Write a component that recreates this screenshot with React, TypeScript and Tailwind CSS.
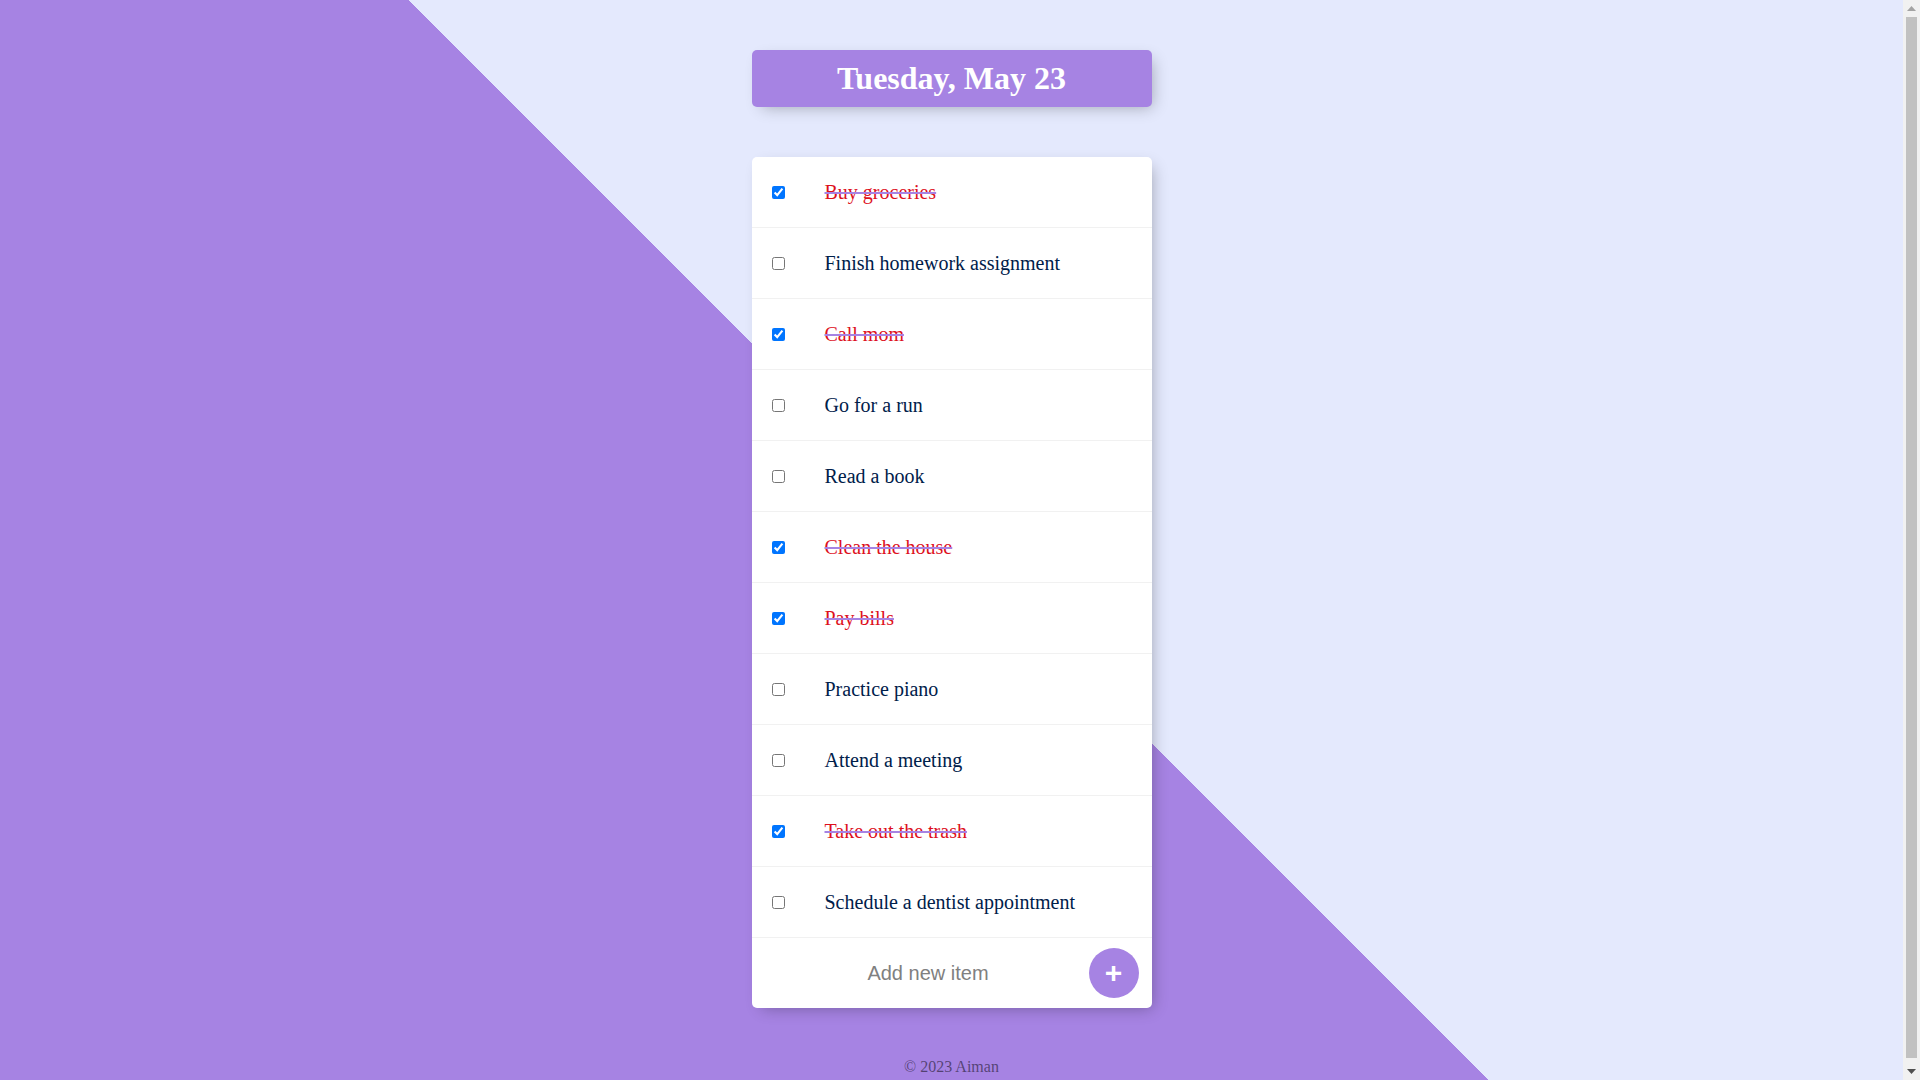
import React from "react";

const items: { text: string; done: boolean }[] = [
  { text: "Buy groceries", done: true },
  { text: "Finish homework assignment", done: false },
  { text: "Call mom", done: true },
  { text: "Go for a run", done: false },
  { text: "Read a book", done: false },
  { text: "Clean the house", done: true },
  { text: "Pay bills", done: true },
  { text: "Practice piano", done: false },
  { text: "Attend a meeting", done: false },
  { text: "Take out the trash", done: true },
  { text: "Schedule a dentist appointment", done: false },
];

function ScrollBar() {
  return (
    <div className="flex w-[17px] shrink-0 flex-col items-center bg-[#f1f1f1]">
      <div className="flex h-[17px] w-full items-center justify-center">
        <svg width="9" height="5" viewBox="0 0 9 5">
          <polygon points="4.5,0 9,5 0,5" fill="#a3a3a3" />
        </svg>
      </div>
      <div className="w-[11px] flex-1 bg-[#c1c1c1]" />
      <div className="h-[5px]" />
      <div className="flex h-[17px] w-full items-center justify-center">
        <svg width="9" height="5" viewBox="0 0 9 5">
          <polygon points="0,0 9,0 4.5,5" fill="#505050" />
        </svg>
      </div>
    </div>
  );
}

export default function App() {
  return (
    <div className="flex h-screen overflow-hidden">
      <div className="min-w-0 flex-1 overflow-hidden">
        <div className="min-h-[1085px] bg-[#E4E9FD] bg-[linear-gradient(45deg,#A683E3_50%,#E4E9FD_50%)] pt-[50px] pb-[8px] font-['Liberation_Serif',serif]">
          <div className="mx-auto max-w-[400px] rounded-[5px] bg-[#A683E3] text-center shadow-[5px_5px_15px_-5px_rgba(0,0,0,0.3)]">
            <h1 className="p-[10px] text-[32px] font-bold leading-[37px] text-white">Tuesday, May 23</h1>
          </div>
          <div className="mx-auto mt-[50px] max-w-[400px] rounded-[5px] bg-white shadow-[5px_5px_15px_-5px_rgba(0,0,0,0.3)]">
            {items.map((it, i) => (
              <div key={i} className="flex min-h-[71px] items-center border-b border-[#F1F1F1]">
                <input type="checkbox" defaultChecked={it.done} className="m-[20px] h-[13px] w-[13px]" />
                <p
                  className={
                    it.done
                      ? "m-0 p-[20px] text-[20px] leading-[23px] text-[#dd101c] line-through decoration-[#A683E3] decoration-2"
                      : "m-0 p-[20px] text-[20px] leading-[23px] text-[#00204a]"
                  }
                >
                  {it.text}
                </p>
              </div>
            ))}
            <div className="flex min-h-[70px] items-center">
              <form className="ml-[20px] flex items-center gap-[4px]" onSubmit={(e) => e.preventDefault()}>
                <input
                  type="text"
                  placeholder="Add new item"
                  className="h-[60px] w-[313px] border-none bg-transparent text-center font-['Liberation_Sans',sans-serif] text-[20px] placeholder:text-[#808080] outline-none"
                />
                <button
                  type="button"
                  className="flex h-[50px] w-[50px] items-center justify-center rounded-full bg-[#A683E3] font-['Liberation_Sans',sans-serif] text-[30px] font-bold leading-none text-white"
                >
                  +
                </button>
              </form>
            </div>
          </div>
          <footer className="mt-[50px] text-center text-[16px] leading-[18px] text-black/50">© 2023 Aiman</footer>
        </div>
      </div>
      <ScrollBar />
    </div>
  );
}
